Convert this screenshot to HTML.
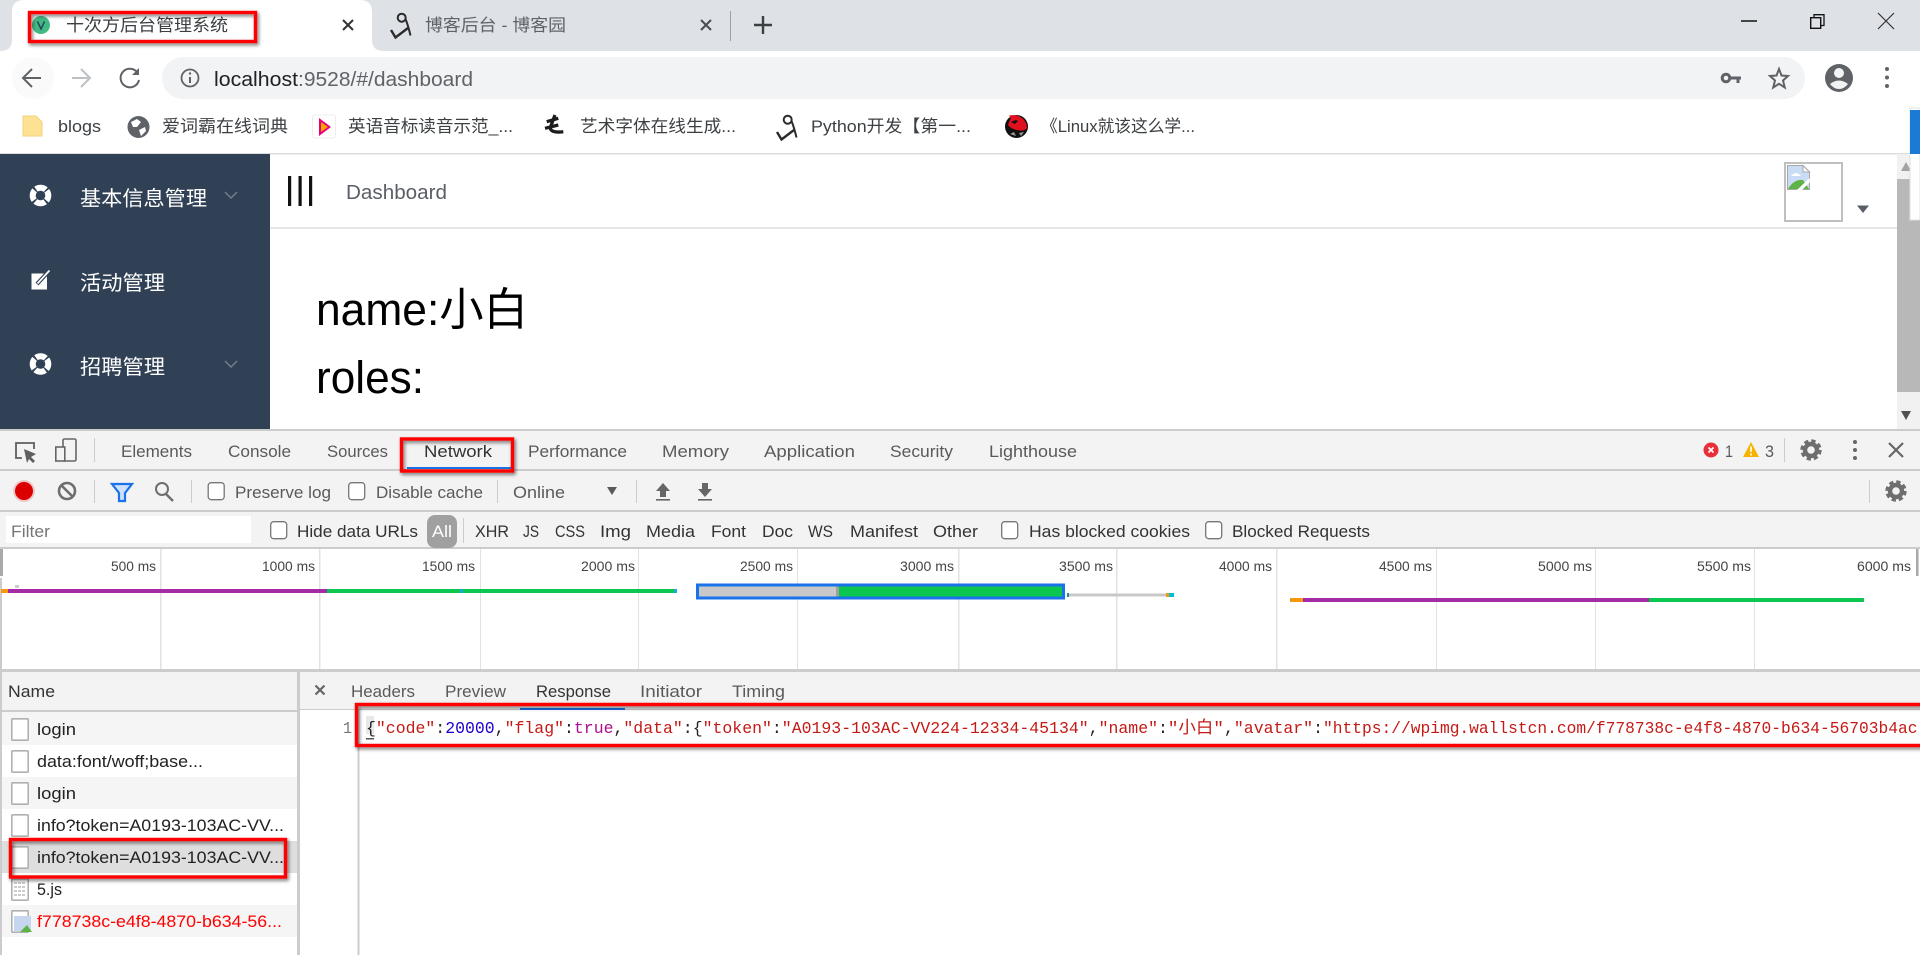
<!DOCTYPE html>
<html lang="zh"><head><meta charset="utf-8"><title>十次方后台管理系统</title>
<style>
html,body{margin:0;padding:0;background:#fff;width:1920px;height:955px;overflow:hidden}
svg{display:block}
text{font-family:"Liberation Sans","Noto Sans CJK SC",sans-serif;white-space:pre}
.m{font-family:"Liberation Mono","Noto Sans CJK SC",monospace;font-size:17px}
.d{font-size:17px;fill:#5a5a5a}
.f{font-size:17px;fill:#333}
.t{font-size:14px;fill:#444}
.b{font-size:17px;fill:#3c4043}
.n{font-size:17px;fill:#222}
.s{font-size:20.5px;fill:#fff}
</style></head><body>
<svg xmlns="http://www.w3.org/2000/svg" width="1920" height="955" viewBox="0 0 1920 955">
<defs>
<filter id="sh" x="-5%" y="-30%" width="110%" height="160%"><feDropShadow dx="1.5" dy="2" stdDeviation="1.8" flood-color="#000" flood-opacity=".55"/></filter>
<g id="gear"><circle r="6" fill="none" stroke="#6e6e6e" stroke-width="4.4"/><circle r="9" fill="none" stroke="#6e6e6e" stroke-width="3.4" stroke-dasharray="4.2 2.87"/></g>
<g id="ring"><circle r="7.800" fill="none" stroke="#fff" stroke-width="6" stroke-dasharray="10.400 1.850" transform="rotate(-37)"/></g>
<g id="chev"><path d="M-6-3 0 3 6-3" fill="none" stroke="#75808e" stroke-width="1.4"/></g>
<g id="cn"><path d="M-9 6-4.500 13.500 8 4" fill="none" stroke="#2b2b2b" stroke-width="2.400"/><circle cx="1.700" cy="-6.300" r="4" fill="none" stroke="#2b2b2b" stroke-width="2"/><path d="M5.500-5Q8 1 10.500 11.500" fill="none" stroke="#2b2b2b" stroke-width="2"/></g>
<g id="doc"><rect x="0.8" y="0.8" width="16.4" height="21.4" fill="#fff" stroke="#b0b0b0" stroke-width="1.6" rx="1"/></g>
<g id="cb"><rect x="0.7" y="0.7" width="16" height="17" rx="3" fill="#fff" stroke="#767676" stroke-width="1.3"/></g>
</defs>

<!-- tab strip -->
<rect width="1920" height="51" fill="#dee1e6"/>
<path d="M0 51Q12 51 12 40V12Q12 0 24 0H360Q372 0 372 12V40Q372 51 384 51Z" fill="#fff"/>
<circle cx="41" cy="25" r="9" fill="#42b983"/><path d="M37.500 21.500 41 29 44.500 21.500" fill="none" stroke="#24475b" stroke-width="1.500"/>
<text x="66" y="31" font-size="17" fill="#3c4043" textLength="162" lengthAdjust="spacingAndGlyphs">十次方后台管理系统</text>
<path d="M343 20 353 30M353 20 343 30" stroke="#333" stroke-width="2"/>
<use href="#cn" x="400" y="24"/>
<text x="425" y="31" font-size="17" fill="#5f6368" textLength="141" lengthAdjust="spacingAndGlyphs">博客后台 - 博客园</text>
<path d="M701 20 711 30M711 20 701 30" stroke="#4a4d50" stroke-width="2"/>
<rect x="730" y="11" width="1" height="30" fill="#9aa0a6"/>
<path d="M763 16V34M754 25H772" stroke="#3c4043" stroke-width="2.400"/>
<path d="M1741 21H1757" stroke="#111" stroke-width="1.500"/>
<rect x="1810.700" y="17.700" width="10" height="10.600" fill="none" stroke="#111" stroke-width="1.400"/><path d="M1814 17V14.700H1824V25.500H1821" fill="none" stroke="#111" stroke-width="1.300"/>
<path d="M1878 13 1894 29M1894 13 1878 29" stroke="#333" stroke-width="1.200"/>

<!-- toolbar -->
<circle cx="33" cy="78" r="21" fill="#fafafa"/>
<path d="M41 78H24M32 69 23 78 32 87" fill="none" stroke="#5f6368" stroke-width="2"/>
<path d="M72 78H89M81 69 90 78 81 87" fill="none" stroke="#bdc1c6" stroke-width="2"/>
<path d="M137 72A9.300 9.300 0 1 0 139 80" fill="none" stroke="#5f6368" stroke-width="2"/><path d="M139 68V75H132Z" fill="#5f6368"/>
<rect x="162" y="57" width="1643" height="42" rx="21" fill="#f1f3f4"/>
<circle cx="190" cy="78" r="8.500" fill="none" stroke="#5f6368" stroke-width="1.800"/><path d="M190 77V83" stroke="#5f6368" stroke-width="2"/><circle cx="190" cy="73.500" r="1.200" fill="#5f6368"/>
<text x="214" y="86" font-size="20" fill="#202124" textLength="84" lengthAdjust="spacingAndGlyphs">localhost</text>
<text x="298" y="86" font-size="20" fill="#5f6368" textLength="175" lengthAdjust="spacingAndGlyphs">:9528/#/dashboard</text>
<circle cx="1726" cy="78" r="3.800" fill="none" stroke="#5f6368" stroke-width="3"/><path d="M1729 76.500H1741V79.500H1739.500V83H1736.500V79.500H1729Z" fill="#5f6368"/>
<path d="M1779 69 1781.500 75.500 1788 76 1783 80.500 1784.800 87.500 1779 83.800 1773.200 87.500 1775 80.500 1770 76 1776.500 75.500Z" fill="none" stroke="#5f6368" stroke-width="2"/>
<circle cx="1839" cy="78" r="14" fill="#5f6368"/><circle cx="1839" cy="73" r="5" fill="#f1f3f4"/><path d="M1830 84Q1839 77 1848 84Q1844 89 1839 89Q1834 89 1830 84Z" fill="#f1f3f4"/>
<circle cx="1887" cy="69" r="2" fill="#5f6368"/><circle cx="1887" cy="77.500" r="2" fill="#5f6368"/><circle cx="1887" cy="86" r="2" fill="#5f6368"/>

<!-- bookmarks -->
<path d="M23 116H36L42 122V136H23Z" fill="#fde293" stroke="#f3d27d"/>
<text x="58" y="132" class="b" textLength="43" lengthAdjust="spacingAndGlyphs">blogs</text>
<circle cx="138.500" cy="127" r="11" fill="#5f6368"/><path d="M131 122 137 119 141 122 137 127 133 127ZM139 130 145 127 146 131 141 136Z" fill="#fff"/>
<text x="162" y="132" class="b" textLength="126" lengthAdjust="spacingAndGlyphs">爱词霸在线词典</text>
<rect x="312.500" y="115" width="23" height="23" rx="2" fill="#fff" stroke="#eee"/>
<path d="M319 118 331 127 319 136Z" fill="#e6007e"/><path d="M321 122 328 127 321 132Z" fill="#f7a600"/>
<text x="348" y="132" class="b" textLength="165" lengthAdjust="spacingAndGlyphs">英语音标读音示范_...</text>
<path d="M546.700 121.700 558.300 118.300M545 128.300 558.300 125M555 115 550 128.300M550 126.700Q550 133.500 563.300 131.700" fill="none" stroke="#1c1c1c" stroke-width="3.300"/>
<text x="580" y="132" class="b" textLength="156" lengthAdjust="spacingAndGlyphs">艺术字体在线生成...</text>
<use href="#cn" x="786" y="126"/>
<text x="811" y="132" class="b" textLength="160" lengthAdjust="spacingAndGlyphs">Python开发【第一...</text>
<ellipse cx="1016.500" cy="126.500" rx="11.500" ry="11.500" fill="#111"/>
<path d="M1009 115.500Q1017 114 1022 118Q1027 122 1027 128Q1024 132 1017 130Q1011 129 1008 125L1009 122Q1012 118 1009 115.500Z" fill="#e0101e"/>
<path d="M1011 122Q1016 119 1018 121L1015 124Z" fill="#111"/>
<path d="M1010 134 1014 132 1016 136ZM1019 133 1024 132 1021 136Z" fill="#999"/>
<text x="1041" y="132" class="b" textLength="154" lengthAdjust="spacingAndGlyphs">《Linux就该这么学...</text>
<rect x="0" y="153" width="1920" height="1.500" fill="#dcdcdc"/>

<!-- page -->
<rect x="0" y="154" width="270" height="275" fill="#304156"/>
<use href="#ring" x="40.500" y="195.500"/>
<text x="80" y="205.500" class="s" textLength="127" lengthAdjust="spacingAndGlyphs">基本信息管理</text>
<use href="#chev" x="231" y="195"/>
<rect x="31.500" y="273.500" width="15.500" height="16" fill="#fff"/><path d="M37 284 50 270" stroke="#304156" stroke-width="4"/><path d="M37.500 283.500 49.500 270.500" stroke="#fff" stroke-width="1.700"/>
<text x="80" y="290" class="s" textLength="85" lengthAdjust="spacingAndGlyphs">活动管理</text>
<use href="#ring" x="40.500" y="364"/>
<text x="80" y="374" class="s" textLength="85" lengthAdjust="spacingAndGlyphs">招聘管理</text>
<use href="#chev" x="231" y="364"/>
<rect x="288" y="176" width="3.200" height="30" fill="#111"/><rect x="298.500" y="176" width="3.200" height="30" fill="#111"/><rect x="309" y="176" width="3.200" height="30" fill="#111"/>
<text x="346" y="199" font-size="20" fill="#5a5e66" textLength="101" lengthAdjust="spacingAndGlyphs">Dashboard</text>
<rect x="270" y="227" width="1627" height="2" fill="#e6e6e6"/>
<rect x="1785" y="163" width="57" height="58" fill="#fff" stroke="#c0c0c0" stroke-width="2"/>
<path d="M1787.500 165.500H1803L1809.500 172V189.500H1787.500Z" fill="#c9dcf5" stroke="#a8a8a8"/><path d="M1803 165.500V172H1809.500Z" fill="#fff" stroke="#a8a8a8"/>
<path d="M1791 176Q1796 170 1801 176Z" fill="#fff"/>
<path d="M1788 189Q1794 179 1803 180L1809 189Z" fill="#5db345"/>
<path d="M1809.500 178 1797 190 1802 190 1810 182Z" fill="#fff"/>
<path d="M1857 205.500H1869L1863 213Z" fill="#5a5e66"/>
<text x="316" y="325" font-size="45" fill="#000" textLength="212" lengthAdjust="spacingAndGlyphs">name:小白</text>
<text x="316" y="393" font-size="45" fill="#000" textLength="108" lengthAdjust="spacingAndGlyphs">roles:</text>
<rect x="1897" y="154" width="23" height="275" fill="#f1f1f1"/>
<path d="M1906 162 1911 171H1901Z" fill="#a3a3a3"/>
<rect x="1897" y="179" width="23" height="213" fill="#b8b8b8"/>
<path d="M1901 411H1911L1906 420Z" fill="#505050"/>
<rect x="1910" y="108" width="10" height="112" fill="#fff" stroke="#e0e0e0"/>
<rect x="1910" y="110" width="10" height="44" fill="#1a7ad4"/>

<!-- devtools -->
<rect x="0" y="429" width="1920" height="526" fill="#f3f3f3"/>
<rect x="0" y="429" width="1920" height="2" fill="#ccc"/>
<rect x="0" y="469" width="1920" height="2" fill="#ccc"/>
<rect x="0" y="510" width="1920" height="2" fill="#ccc"/>
<rect x="0" y="547" width="1920" height="2" fill="#ccc"/>
<path d="M22 458H16V443H34V449" fill="none" stroke="#5f5f5f" stroke-width="1.800"/><path d="M24 449 36 454 31 457 35 461 33 463 29 459 27 463Z" fill="#5f5f5f"/>
<rect x="63" y="439" width="13" height="22" rx="1.500" fill="none" stroke="#666" stroke-width="1.600"/><rect x="55.800" y="447" width="9" height="14" fill="#f3f3f3" stroke="#666" stroke-width="1.600"/>
<rect x="94" y="438" width="1" height="24" fill="#ccc"/>
<text x="121" y="457" class="d" textLength="71" lengthAdjust="spacingAndGlyphs">Elements</text>
<text x="228" y="457" class="d" textLength="63" lengthAdjust="spacingAndGlyphs">Console</text>
<text x="327" y="457" class="d" textLength="61" lengthAdjust="spacingAndGlyphs">Sources</text>
<text x="424" y="457" class="f" textLength="68" lengthAdjust="spacingAndGlyphs">Network</text>
<text x="528" y="457" class="d" textLength="99" lengthAdjust="spacingAndGlyphs">Performance</text>
<text x="662" y="457" class="d" textLength="67" lengthAdjust="spacingAndGlyphs">Memory</text>
<text x="764" y="457" class="d" textLength="91" lengthAdjust="spacingAndGlyphs">Application</text>
<text x="890" y="457" class="d" textLength="63" lengthAdjust="spacingAndGlyphs">Security</text>
<text x="989" y="457" class="d" textLength="88" lengthAdjust="spacingAndGlyphs">Lighthouse</text>
<rect x="407" y="467" width="104" height="2" fill="#1a73e8"/>
<circle cx="1711" cy="450" r="7.500" fill="#e8303a"/><path d="M1708.500 447.500 1713.500 452.500M1713.500 447.500 1708.500 452.500" stroke="#fff" stroke-width="1.600"/>
<text x="1725" y="457" class="d" textLength="8" lengthAdjust="spacingAndGlyphs">1</text>
<path d="M1751 442 1759 457H1743Z" fill="#f4b400"/><path d="M1751 446.500V452M1751 453.500V455.500" stroke="#fff" stroke-width="1.600"/>
<text x="1765" y="457" class="d" textLength="9" lengthAdjust="spacingAndGlyphs">3</text>
<rect x="1784" y="438" width="1" height="24" fill="#ccc"/>
<use href="#gear" x="1811" y="450"/>
<circle cx="1855" cy="442" r="2" fill="#666"/><circle cx="1855" cy="450" r="2" fill="#666"/><circle cx="1855" cy="458" r="2" fill="#666"/>
<path d="M1889 443 1903 457M1903 443 1889 457" stroke="#666" stroke-width="2.200"/>

<circle cx="24" cy="491" r="11" fill="#e00000" opacity=".18"/><circle cx="24" cy="491" r="9" fill="#dc0000"/>
<circle cx="67" cy="491" r="8" fill="none" stroke="#6e6e6e" stroke-width="2.600"/><path d="M61.500 485.500 72.500 496.500" stroke="#6e6e6e" stroke-width="2.600"/>
<rect x="94" y="480" width="1" height="23" fill="#ccc"/>
<path d="M112 484H132L125 493V501L119 501V493Z" fill="#cfe0fb" stroke="#1a73e8" stroke-width="2.200"/>
<circle cx="162" cy="489" r="6" fill="none" stroke="#6e6e6e" stroke-width="2"/><path d="M166 494 173 501" stroke="#6e6e6e" stroke-width="2.400"/>
<rect x="191" y="480" width="1" height="23" fill="#ccc"/>
<use href="#cb" x="207.500" y="482"/>
<text x="235" y="498" class="d" textLength="96" lengthAdjust="spacingAndGlyphs">Preserve log</text>
<use href="#cb" x="348" y="482"/>
<text x="376" y="498" class="d" textLength="107" lengthAdjust="spacingAndGlyphs">Disable cache</text>
<rect x="497" y="480" width="1" height="23" fill="#ccc"/>
<text x="513" y="498" class="d" textLength="52" lengthAdjust="spacingAndGlyphs">Online</text>
<path d="M607 487H617L612 495Z" fill="#5a5a5a"/>
<rect x="636" y="480" width="1" height="23" fill="#ccc"/>
<path d="M663 483 670 491H666V497H660V491H656Z" fill="#666"/><rect x="656" y="499" width="14" height="1.600" fill="#666"/>
<path d="M705 497 698 489H702V483H708V489H712Z" fill="#666"/><rect x="698" y="499" width="14" height="1.600" fill="#666"/>
<rect x="1869" y="480" width="1" height="23" fill="#ccc"/>
<use href="#gear" x="1896" y="491"/>

<rect x="6" y="516" width="245" height="27" fill="#fff"/>
<text x="11" y="537" font-size="17" fill="#757575" textLength="39" lengthAdjust="spacingAndGlyphs">Filter</text>
<use href="#cb" x="270" y="521"/>
<text x="297" y="537" class="f" textLength="121" lengthAdjust="spacingAndGlyphs">Hide data URLs</text>
<rect x="427" y="515" width="30" height="33" rx="8" fill="#a0a0a0"/>
<text x="432" y="537" font-size="17" fill="#fff" textLength="20" lengthAdjust="spacingAndGlyphs">All</text>
<rect x="463" y="518" width="1" height="25" fill="#ccc"/>
<text x="475" y="537" class="f" textLength="34" lengthAdjust="spacingAndGlyphs">XHR</text>
<text x="523" y="537" class="f" textLength="16" lengthAdjust="spacingAndGlyphs">JS</text>
<text x="555" y="537" class="f" textLength="30" lengthAdjust="spacingAndGlyphs">CSS</text>
<text x="600" y="537" class="f" textLength="31" lengthAdjust="spacingAndGlyphs">Img</text>
<text x="646" y="537" class="f" textLength="49" lengthAdjust="spacingAndGlyphs">Media</text>
<text x="711" y="537" class="f" textLength="35" lengthAdjust="spacingAndGlyphs">Font</text>
<text x="762" y="537" class="f" textLength="31" lengthAdjust="spacingAndGlyphs">Doc</text>
<text x="808" y="537" class="f" textLength="25" lengthAdjust="spacingAndGlyphs">WS</text>
<text x="850" y="537" class="f" textLength="68" lengthAdjust="spacingAndGlyphs">Manifest</text>
<text x="933" y="537" class="f" textLength="45" lengthAdjust="spacingAndGlyphs">Other</text>
<use href="#cb" x="1001" y="521"/>
<text x="1029" y="537" class="f" textLength="161" lengthAdjust="spacingAndGlyphs">Has blocked cookies</text>
<use href="#cb" x="1205" y="521"/>
<text x="1232" y="537" class="f" textLength="138" lengthAdjust="spacingAndGlyphs">Blocked Requests</text>

<!-- timeline -->
<rect x="0" y="549" width="1920" height="120" fill="#fff"/>
<rect x="0" y="549" width="3" height="27" fill="#a9a9a9"/><rect x="0" y="578" width="2" height="91" fill="#ccc"/>
<rect x="1916" y="549" width="2.500" height="27" fill="#a9a9a9"/>
<g fill="#e2e2e2"><rect x="160" y="549" width="1.500" height="120"/><rect x="319" y="549" width="1.500" height="120"/><rect x="480" y="549" width="1" height="120"/><rect x="638" y="549" width="1" height="120"/><rect x="797" y="549" width="1" height="120"/><rect x="958" y="549" width="1.500" height="120"/><rect x="1116" y="549" width="1.500" height="120"/><rect x="1276" y="549" width="1.500" height="120"/><rect x="1436" y="549" width="1" height="120"/><rect x="1595" y="549" width="1" height="120"/><rect x="1754" y="549" width="1" height="120"/></g>
<text x="111" y="571" class="t" textLength="45" lengthAdjust="spacingAndGlyphs">500 ms</text>
<text x="262" y="571" class="t" textLength="53" lengthAdjust="spacingAndGlyphs">1000 ms</text>
<text x="422" y="571" class="t" textLength="53" lengthAdjust="spacingAndGlyphs">1500 ms</text>
<text x="581" y="571" class="t" textLength="54" lengthAdjust="spacingAndGlyphs">2000 ms</text>
<text x="740" y="571" class="t" textLength="53" lengthAdjust="spacingAndGlyphs">2500 ms</text>
<text x="900" y="571" class="t" textLength="54" lengthAdjust="spacingAndGlyphs">3000 ms</text>
<text x="1059" y="571" class="t" textLength="54" lengthAdjust="spacingAndGlyphs">3500 ms</text>
<text x="1219" y="571" class="t" textLength="53" lengthAdjust="spacingAndGlyphs">4000 ms</text>
<text x="1379" y="571" class="t" textLength="53" lengthAdjust="spacingAndGlyphs">4500 ms</text>
<text x="1538" y="571" class="t" textLength="54" lengthAdjust="spacingAndGlyphs">5000 ms</text>
<text x="1697" y="571" class="t" textLength="54" lengthAdjust="spacingAndGlyphs">5500 ms</text>
<text x="1857" y="571" class="t" textLength="54" lengthAdjust="spacingAndGlyphs">6000 ms</text>
<rect x="15" y="585" width="4" height="3" fill="#ccc"/>
<rect x="1" y="589" width="7" height="4" fill="#f59a10"/><rect x="8" y="589" width="319" height="4" fill="#a32ba3"/><rect x="327" y="589" width="348" height="4" fill="#0bc64f"/><rect x="460" y="589" width="3" height="4" fill="#1da8d8"/><rect x="674" y="589" width="3" height="4" fill="#1da8d8"/>
<rect x="697.500" y="585" width="366" height="13" fill="#c8c8c8" stroke="#1a73e8" stroke-width="3"/>
<rect x="836" y="586.500" width="3" height="10" fill="#a0a0a0"/><rect x="839" y="586.500" width="223" height="10" fill="#0bc64f"/>
<rect x="1067" y="593" width="2" height="4" fill="#2a8f8f"/><rect x="1069" y="593.500" width="97" height="3" fill="#c8c8c8"/><rect x="1166" y="593" width="3" height="4" fill="#f59a10"/><rect x="1169" y="593" width="5" height="4" fill="#00bcd4"/>
<rect x="1290" y="598" width="13" height="4" fill="#f59a10"/><rect x="1303" y="598" width="346" height="4" fill="#a32ba3"/><rect x="1649" y="598" width="215" height="4" fill="#0bc64f"/>
<rect x="0" y="669" width="1920" height="3" fill="#ccc"/>

<!-- name column -->
<rect x="0" y="672" width="2" height="283" fill="#ccc"/>
<rect x="2" y="712" width="295" height="243" fill="#fff"/>
<rect x="2" y="710" width="295" height="2" fill="#ccc"/>
<rect x="297" y="672" width="3" height="283" fill="#ccc"/>
<text x="8" y="697" class="f" textLength="47" lengthAdjust="spacingAndGlyphs">Name</text>
<rect x="2" y="712" width="295" height="33" fill="#f5f5f5"/>
<rect x="2" y="777" width="295" height="32" fill="#f5f5f5"/>
<rect x="2" y="841" width="295" height="32" fill="#dedede"/>
<rect x="2" y="905" width="295" height="32" fill="#f5f5f5"/>
<use href="#doc" x="11" y="718"/><text x="37" y="735" class="n" textLength="39" lengthAdjust="spacingAndGlyphs">login</text>
<use href="#doc" x="11" y="750"/><text x="37" y="767" class="n" textLength="166" lengthAdjust="spacingAndGlyphs">data:font/woff;base...</text>
<use href="#doc" x="11" y="782"/><text x="37" y="799" class="n" textLength="39" lengthAdjust="spacingAndGlyphs">login</text>
<use href="#doc" x="11" y="814"/><text x="37" y="831" class="n" textLength="247" lengthAdjust="spacingAndGlyphs">info?token=A0193-103AC-VV...</text>
<use href="#doc" x="11" y="846"/><text x="37" y="863" class="n" textLength="247" lengthAdjust="spacingAndGlyphs">info?token=A0193-103AC-VV...</text>
<use href="#doc" x="11" y="878"/><path d="M14 883H26M14 887H26M14 891H26M14 895H26" stroke="#ccc" stroke-width="2" stroke-dasharray="3 1"/><text x="37" y="895" class="n" textLength="25" lengthAdjust="spacingAndGlyphs">5.js</text>
<use href="#doc" x="11" y="910"/><rect x="14" y="916" width="17" height="15" fill="#c6d6ee"/><path d="M20 932 27 925 32 932Z" fill="#5db345"/><text x="37" y="927" font-size="17" fill="#f00" textLength="245" lengthAdjust="spacingAndGlyphs">f778738c-e4f8-4870-b634-56...</text>

<!-- response panel -->
<rect x="300" y="710" width="1620" height="245" fill="#fff"/>
<rect x="300" y="709" width="1620" height="1" fill="#ccc"/>
<path d="M315.500 685.500 324.500 694.500M324.500 685.500 315.500 694.500" stroke="#666" stroke-width="2.200"/>
<text x="351" y="697" class="d" textLength="64" lengthAdjust="spacingAndGlyphs">Headers</text>
<text x="445" y="697" class="d" textLength="61" lengthAdjust="spacingAndGlyphs">Preview</text>
<text x="536" y="697" class="f" textLength="75" lengthAdjust="spacingAndGlyphs">Response</text>
<text x="640" y="697" class="d" textLength="62" lengthAdjust="spacingAndGlyphs">Initiator</text>
<text x="732" y="697" class="d" textLength="53" lengthAdjust="spacingAndGlyphs">Timing</text>
<rect x="520" y="708" width="105" height="2" fill="#1a73e8"/>
<rect x="357.500" y="710" width="2" height="245" fill="#ccc"/>
<text x="343" y="733" class="m" style="fill:#777" textLength="9" lengthAdjust="spacingAndGlyphs">1</text>
<rect x="366" y="716" width="8" height="18" fill="#e8e8e8"/><rect x="366" y="738" width="8" height="1.500" fill="#555"/>
<g class="m">
<text x="366" y="733" class="m" style="fill:#222" textLength="9.900" lengthAdjust="spacingAndGlyphs">{</text>
<text x="375.900" y="733" class="m" style="fill:#c41a16" textLength="59.400" lengthAdjust="spacingAndGlyphs">"code"</text>
<text x="435.300" y="733" class="m" style="fill:#222" textLength="9.900" lengthAdjust="spacingAndGlyphs">:</text>
<text x="445.200" y="733" class="m" style="fill:#1c00cf" textLength="49.500" lengthAdjust="spacingAndGlyphs">20000</text>
<text x="494.700" y="733" class="m" style="fill:#222" textLength="9.900" lengthAdjust="spacingAndGlyphs">,</text>
<text x="504.600" y="733" class="m" style="fill:#c41a16" textLength="59.400" lengthAdjust="spacingAndGlyphs">"flag"</text>
<text x="564" y="733" class="m" style="fill:#222" textLength="9.900" lengthAdjust="spacingAndGlyphs">:</text>
<text x="573.900" y="733" class="m" style="fill:#aa0d91" textLength="39.600" lengthAdjust="spacingAndGlyphs">true</text>
<text x="613.500" y="733" class="m" style="fill:#222" textLength="9.900" lengthAdjust="spacingAndGlyphs">,</text>
<text x="623.400" y="733" class="m" style="fill:#c41a16" textLength="59.400" lengthAdjust="spacingAndGlyphs">"data"</text>
<text x="682.800" y="733" class="m" style="fill:#222" textLength="19.800" lengthAdjust="spacingAndGlyphs">:{</text>
<text x="702.600" y="733" class="m" style="fill:#c41a16" textLength="69.300" lengthAdjust="spacingAndGlyphs">"token"</text>
<text x="771.900" y="733" class="m" style="fill:#222" textLength="9.900" lengthAdjust="spacingAndGlyphs">:</text>
<text x="781.800" y="733" class="m" style="fill:#c41a16" textLength="306.900" lengthAdjust="spacingAndGlyphs">"A0193-103AC-VV224-12334-45134"</text>
<text x="1088.700" y="733" class="m" style="fill:#222" textLength="9.900" lengthAdjust="spacingAndGlyphs">,</text>
<text x="1098.600" y="733" class="m" style="fill:#c41a16" textLength="59.400" lengthAdjust="spacingAndGlyphs">"name"</text>
<text x="1158" y="733" class="m" style="fill:#222" textLength="9.900" lengthAdjust="spacingAndGlyphs">:</text>
<text x="1167.900" y="733" class="m" style="fill:#c41a16" textLength="56" lengthAdjust="spacingAndGlyphs">"小白"</text>
<text x="1224" y="733" class="m" style="fill:#222" textLength="9.900" lengthAdjust="spacingAndGlyphs">,</text>
<text x="1233.900" y="733" class="m" style="fill:#c41a16" textLength="79.200" lengthAdjust="spacingAndGlyphs">"avatar"</text>
<text x="1313.100" y="733" class="m" style="fill:#222" textLength="9.900" lengthAdjust="spacingAndGlyphs">:</text>
<text x="1323" y="733" class="m" style="fill:#c41a16" textLength="623.700" lengthAdjust="spacingAndGlyphs">"https://wpimg.wallstcn.com/f778738c-e4f8-4870-b634-56703b4ac...</text>
</g>

<!-- red annotation boxes -->
<g fill="none" stroke="#f00" stroke-width="3.400" filter="url(#sh)">
<rect x="29.500" y="12.500" width="226" height="29"/>
<rect x="401.500" y="439" width="111" height="32"/>
<rect x="10.500" y="839.500" width="275" height="37.500"/>
<rect x="356.500" y="704.500" width="1600" height="41"/>
</g>
</svg>
</body></html>
